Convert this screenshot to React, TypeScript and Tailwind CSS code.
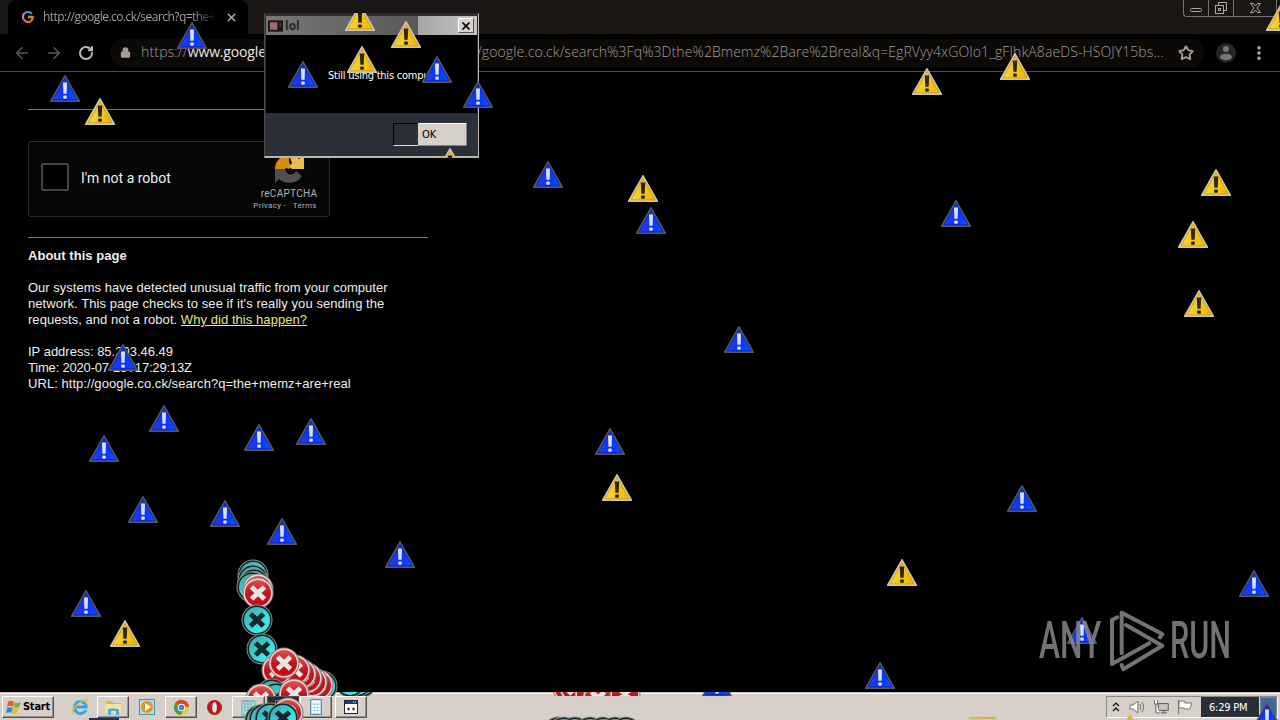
import React from "react";
import { ArrowLeft, ArrowRight, RotateCw, Lock, Star, X, MoreVertical } from "lucide-react";

type Mark = { x: number; y: number; clip?: string };

const blueMarks: Mark[] = [
    { x: 192, y: 36 }, { x: 65, y: 89 }, { x: 303, y: 75 }, { x: 437, y: 70 }, { x: 478, y: 95 },
    { x: 548, y: 175 }, { x: 651, y: 221 }, { x: 956, y: 214 }, { x: 739, y: 340 }, { x: 123, y: 358 },
    { x: 164, y: 419 }, { x: 104, y: 449 }, { x: 259, y: 438 }, { x: 311, y: 432 }, { x: 143, y: 510 },
    { x: 225, y: 514 }, { x: 282, y: 532 }, { x: 400, y: 555 }, { x: 610, y: 442 }, { x: 1022, y: 499 },
    { x: 86, y: 604 }, { x: 1254, y: 584 }, { x: 880, y: 676 }, { x: 1082, y: 631 },
    { x: 717, y: 684, clip: "inset(22px 0 1px 0)" }, { x: 1267, y: 716 },
];

const yellowMarks: Mark[] = [
    { x: 100, y: 112 }, { x: 362, y: 60 }, { x: 406, y: 35 }, { x: 360, y: 18, clip: "inset(9px 0 0 0)" },
    { x: 450, y: 162, clip: "inset(0 0 17px 0)" }, { x: 927, y: 82 }, { x: 1015, y: 67 }, { x: 643, y: 189 },
    { x: 1216, y: 183 }, { x: 1193, y: 235 }, { x: 1199, y: 304 }, { x: 617, y: 488 }, { x: 902, y: 573 },
    { x: 125, y: 634 }, { x: 1281, y: 18 }, { x: 1130, y: 727 },
    { x: 982, y: 707, clip: "inset(24px 0 0 0)" },
];

const upperStack: { x: number; y: number; red?: boolean }[] = [
    { x: 253, y: 575 }, { x: 253, y: 580 }, { x: 254, y: 584 }, { x: 252, y: 587 },
    { x: 258, y: 589, red: true }, { x: 258, y: 593, red: true },
    { x: 257, y: 620 }, { x: 262, y: 649 },
    { x: 322, y: 686 }, { x: 318, y: 685, red: true }, { x: 312, y: 682, red: true }, { x: 307, y: 678, red: true },
    { x: 301, y: 674, red: true }, { x: 295, y: 670, red: true }, { x: 277, y: 670, red: true },
    { x: 284, y: 663, red: true },
    { x: 272, y: 694 }, { x: 276, y: 698 }, { x: 261, y: 699, red: true }, { x: 294, y: 694, red: true },
];

function BlueTriangle({ mark }: { mark: Mark }) {
    return (
        <svg
            className="absolute h-[27px] w-[30px]"
            style={{ left: mark.x - 15, top: mark.y - 14, clipPath: mark.clip }}
            viewBox="0 0 30 27"
        >
            <path d="M15 .8 29.3 26.2H.7Z" fill="url(#blueFill)" stroke="#55585a" strokeWidth="1.6" strokeLinejoin="round" />
            <path d="M15 3.5 27 24.8H3Z" fill="none" stroke="#0a22b4" strokeWidth=".8" />
            <path d="M13 7.5h4L16.6 18.8h-3.2Z" fill="#dce2fa" />
            <rect x="13.2" y="20.400" width="3.600" height="3.400" rx="1" fill="#dce2fa" />
        </svg>
    );
}

function YellowTriangle({ mark }: { mark: Mark }) {
    return (
        <svg
            className="absolute h-[27px] w-[30px]"
            style={{ left: mark.x - 15, top: mark.y - 14, clipPath: mark.clip }}
            viewBox="0 0 30 27"
        >
            <path d="M15 .8 29.3 26.2H.7Z" fill="url(#yellowFill)" stroke="#cbc5b8" strokeWidth="1.6" strokeLinejoin="round" />
            <path d="M15 3.5 27 24.8H3Z" fill="none" stroke="#d69b00" strokeWidth=".8" />
            <path d="M12.8 7.5h4.400L16.6 18.8h-3.200Z" fill="#28240f" />
            <rect x="13.1" y="20.400" width="3.8" height="3.4" rx="1" fill="#28240f" />
        </svg>
    );
}

function Orb({ x, y, red }: { x: number; y: number; red?: boolean }) {
    return (
        <g transform={`translate(${x} ${y})`}>
            <circle r="15.5" fill={red ? "#8b7d7a" : "#858d8b"} />
            <circle r="14.5" fill={red ? "#e7d6d3" : "#142222"} />
            <circle r="13" fill={red ? "url(#redFill)" : "url(#tealFill)"} />
            <path d="M-6.500-6 6.500 6M6.500-6-6.500 6" stroke={red ? "#e9e6e2" : "#17262b"} strokeWidth="5" />
        </g>
    );
}

function BrowserBar() {
    return (
        <header className="flex h-[72px] flex-col border-b border-[#4c4c4c]">
            <div className="flex h-[34px] shrink-0 justify-between bg-[#1a1613]">
                <div className="ml-2 flex h-[34px] w-60 items-center rounded-t-lg bg-black pl-[14px] text-[#a8a4a0]">
                    <svg className="h-3 w-3" viewBox="0 0 12 12" fill="none" strokeWidth="2.3">
                        <path d="M9.8 2.8A5 5 0 0 0 3 1.9" stroke="#22a7b8" />
                        <path d="M3 1.9A5 5 0 0 0 1.6 8.3" stroke="#b57dbb" />
                        <path d="M1.6 8.3A5 5 0 0 0 8.8 10.2" stroke="#de653e" />
                        <path d="M8.8 10.2A5 5 0 0 0 10.8 6H6" stroke="#c9823c" />
                    </svg>
                    <span className="ml-[9px] w-[178px] whitespace-nowrap bg-linear-to-r from-[#a8a4a0] from-85% to-black bg-clip-text font-['Open_Sans'] text-[12px] tracking-[-0.54px] text-transparent">
                        http://google.co.ck/search?q=the+r
                    </span>
                    <X className="ml-[4px] h-[13px] w-[13px]" strokeWidth={3} />
                </div>
                <div className="mr-[3px] flex h-[17px] rounded-b border border-t-0 border-[#77726f] text-[#aaa6a3]">
                    <div className="flex w-[25px] justify-center border-r border-[#77726f]">
                        <svg className="h-4 w-4" viewBox="0 0 16 16" fill="none" stroke="currentColor">
                            <rect x="2.5" y="8.5" width="11" height="3" rx="1" />
                        </svg>
                    </div>
                    <div className="flex w-[25px] justify-center border-r border-[#77726f]">
                        <svg className="h-4 w-4" viewBox="0 0 16 16" fill="none" stroke="currentColor">
                            <path d="M5.5 5V2.500h8v8H11" />
                            <rect x="2.500" y="5.500" width="8" height="8" />
                            <rect x="5.500" y="8.500" width="2" height="2" />
                        </svg>
                    </div>
                    <div className="flex w-[42px] justify-center">
                        <svg className="h-4 w-4" viewBox="0 0 16 16" fill="none" stroke="currentColor">
                            <path d="M3.500 3.500h3L8.500 6l2-2.500h3L10 8l3.500 4.500h-3L8.500 10l-2 2.500h-3L7 8Z" />
                        </svg>
                    </div>
                </div>
            </div>
            <div className="flex h-[37px] items-center bg-black">
                <ArrowLeft className="ml-[13px] h-[18px] w-[18px] text-[#5b5b5b]" />
                <ArrowRight className="ml-[14px] h-[18px] w-[18px] text-[#5b5b5b]" />
                <RotateCw className="ml-[15px] h-4 w-4 text-[#b8b8b8]" strokeWidth={3} />
                <div className="ml-4 flex h-7 w-[1095px] items-center rounded-full bg-[#0c0907] pl-[10px] text-[#a19d99]">
                    <Lock className="h-[13px] w-[11px] fill-current" strokeWidth={2.5} />
                    <div className="relative -top-px ml-[10px] h-5 w-[1026px] whitespace-nowrap font-['Open_Sans'] text-[14px] leading-5 font-light">
                        <span className="tracking-[0.17px]">
                            https://<span className="font-normal tracking-[-0.15px] text-[#e9e6e2]">www.google</span>
                        </span>
                        <span className="absolute left-[336px] top-0 tracking-[0.09px]">
                            /google.co.ck/search%3Fq%3Dthe%2Bmemz%2Bare%2Breal&amp;q=EgRVyy4xGOIo1_gFIhkA8aeDS-HSOJY15bs...
                        </span>
                    </div>
                    <Star className="ml-[11px] h-4 w-4" strokeWidth={2.8} />
                </div>
                <svg className="ml-[11px] h-5 w-5" viewBox="0 0 20 20">
                    <circle cx="10" cy="10" r="10" fill="#252525" />
                    <circle cx="10" cy="6" r="3" fill="#777" />
                    <ellipse cx="10" cy="14" rx="6" ry="3.200" fill="#777" />
                </svg>
                <MoreVertical className="ml-[14px] h-[18px] w-[18px] text-[#b0b0b0]" strokeWidth={2.800} />
            </div>
        </header>
    );
}

function Captcha() {
    return (
        <div className="mt-[31px] flex h-[76px] w-[302px] rounded-[3px] border border-[#2b2b2b] bg-[#060606] pl-3">
            <div className="mt-[21px] h-7 w-7 rounded-[2px] border-2 border-[#444] bg-black" />
            <span className="ml-3 mt-[26px] w-[170px] font-['Roboto'] text-[14px] leading-5">I'm not a robot</span>
            <div className="flex w-[76px] flex-col items-center text-[#b2b2b2]">
                <svg className="mt-[11px] h-[31px] w-[31px]" viewBox="0 0 31 31">
                    <path d="M1 16A14 14 0 0 1 15 2v7l2 4-2 3-3-1-1 1Z" fill="#d58c12" />
                    <path d="M15 2a14 14 0 0 1 10 4l5-4v14H18l-3-2 3-4Z" fill="#e8bd4c" />
                    <path d="M1 16v14l4-4c7 6 18 5 23-3l-6-5c-2 5-9 5-11-2Z" fill="#505050" />
                </svg>
                <span className="mt-[3px] font-['Roboto'] text-[10px] leading-[13px] tracking-[0.3px]">reCAPTCHA</span>
                <span className="-ml-2 mt-[1px] whitespace-pre font-['Roboto'] text-[8px] leading-[10px] tracking-[0.3px]">Privacy -   Terms</span>
            </div>
        </div>
    );
}

function Page() {
    return (
        <main className="h-[620px] pl-7 pt-[37px] font-['Liberation_Sans'] text-[13px] leading-4 text-[#eeeeee]">
            <hr className="w-[400px] border-[#747474]" />
            <Captcha />
            <hr className="mt-5 w-[400px] border-[#747474]" />
            <p className="mt-[10px] font-bold tracking-[0.03px]">About this page</p>
            <p className="mt-4 whitespace-nowrap">
                <span className="tracking-[0.01px]">Our systems have detected unusual traffic from your computer</span>
                <br />
                <span className="tracking-[0.07px]">network. This page checks to see if it's really you sending the</span>
                <br />
                <span className="tracking-[0.04px]">requests, and not a robot. </span>
                <span className="tracking-[0.06px] text-[#e5e879] underline">Why did this happen?</span>
            </p>
            <p className="mt-4">
                IP address: 85.203.46.49
                <br />
                <span className="tracking-[-0.19px]">Time: 2020-07-23T17:29:13Z</span>
                <br />
                <span className="tracking-[0.05px]">URL: http://google.co.ck/search?q=the+memz+are+real</span>
            </p>
        </main>
    );
}

function Dialog() {
    return (
        <div className="absolute left-[264px] top-[13px] flex h-[145px] w-[215px] flex-col border border-b-2 border-[#b9b7af] border-l-[#4d4d4d] border-t-[#292929] bg-[#2b2f37] px-px pt-[2px] font-['DejaVu_Sans_Condensed'] text-[11px]">
            <div className="flex h-[19px] shrink-0">
                <div className="flex w-[152px] items-center bg-linear-to-r from-[#777] to-[#595959] pl-[2px] text-[#2b2b2b]">
                    <svg className="h-3 w-[15px]" viewBox="0 0 16 12">
                        <rect width="16" height="12" fill="#171717" />
                        <rect x="2" y="2" width="8" height="8" fill="#9f696b" />
                        <path d="M12 2h2v6h-2" fill="#592425" />
                    </svg>
                    <span className="ml-[2px] pt-px text-[12px] font-bold">lol</span>
                </div>
                <div className="flex flex-1 items-center justify-end bg-linear-to-r from-[#a5a5a5] to-[#c5c5c5] pr-[3px]">
                    <div className="flex h-[15px] w-4 items-center justify-center border border-[#555] border-l-white border-t-white bg-[#d6d2ca] text-black">
                        <X className="h-[12px] w-[12px] shrink-0" strokeWidth={3.500} />
                    </div>
                </div>
            </div>
            <div className="h-[78px] shrink-0 whitespace-nowrap bg-black pl-[62px] pt-[33px] leading-4 tracking-[-0.23px] text-white">
                Still using this compu
            </div>
            <div className="ml-[127px] mt-[10px] flex h-[23px] w-[74px] shrink-0">
                <div className="w-[25px] border border-r-0 border-black border-b-[#dedede]" />
                <div className="flex-1 border border-[#87857f] border-l-0 border-t-white bg-[#d4d0c8] pl-[4px] leading-[21px] text-black">OK</div>
            </div>
        </div>
    );
}

function TaskButton({ children, className = "" }: { children?: React.ReactNode; className?: string }) {
    return (
        <div className={"flex h-[22px] shrink-0 items-center justify-center border border-[#55524e] border-l-white border-t-white shadow-[inset_-1px_-1px_#96928d] " + className}>
            {children}
        </div>
    );
}

function Taskbar() {
    return (
        <footer className="flex h-7 items-start border-t border-[#bdb9b3] bg-[#d6d0c9] pt-[3px] shadow-[inset_0_1px_white]">
            <TaskButton className="ml-[2px] w-[52px] font-['DejaVu_Sans_Condensed'] text-[11px] font-bold text-black">
                <svg className="mr-px h-4 w-4" viewBox="0 0 16 16">
                    <path d="M2 3c2-2 4-1 6 0L7 8C5 6 3 7 1 8Z" fill="#e85b25" />
                    <path d="M9 3c2 2 4 1 6 0l-2 5c-2 1-4 1-5 0Z" fill="#78ac3e" />
                    <path d="M1 9c2-1 4-1 6 0l-2 5c-2-1-3-1-5 0Z" fill="#388ac3" />
                    <path d="M8 9c2 1 3 1 5 0l-2 5c-2 1-4 1-5 0Z" fill="#f1b72f" />
                </svg>
                <span className="pt-px tracking-[-0.2px]">Start</span>
            </TaskButton>
            <svg className="ml-[17px] mt-[2px] h-[18px] w-[18px]" viewBox="0 0 18 18" fill="none">
                <path d="M15 12a6 6 0 1 1 0-5v2H5" stroke="#3aa5db" strokeWidth="3" />
                <path d="M2 16C-1 13 7 5 13 2c4-2 4 1 2 3" stroke="#e5b94a" strokeWidth="1.300" />
            </svg>
            <TaskButton className="relative ml-2 w-8">
                <svg className="h-[18px] w-[18px]" viewBox="0 0 18 18">
                    <path d="M2 3h6l2 2h7v10H2Z" fill="#ddb656" />
                    <path d="M1 6h16v9H1Z" fill="#f3e49b" />
                    <path d="M4 17v-5c0-2 11-2 11 0v5h-3v-4H7v4Z" fill="#55a8d4" />
                </svg>
                <span className="absolute -bottom-[3px] -left-[9px] h-[2px] w-[30px] bg-[#26305c]" />
            </TaskButton>
            <svg className="ml-[10px] mt-[3px] h-4 w-4" viewBox="0 0 16 16">
                <rect x=".5" y=".5" width="15" height="15" fill="#b8dae9" stroke="#4594b8" />
                <circle cx="8" cy="8" r="6" fill="#ed9121" />
                <path d="m6 4 6 4-6 4Z" fill="white" />
            </svg>
            <TaskButton className="ml-[10px] w-8">
                <svg className="h-[17px] w-[17px]" viewBox="0 0 18 18">
                    <circle cx="9" cy="9" r="8" fill="#e9ca32" />
                    <path d="M9 9 2 5a8 8 0 0 1 15 3Z" fill="#d84733" />
                    <path d="M9 9 2 5a8 8 0 0 0 6 12l4-6Z" fill="#449d50" />
                    <circle cx="9" cy="9" r="4" fill="white" />
                    <circle cx="9" cy="9" r="3" fill="#3f84c5" />
                </svg>
            </TaskButton>
            <svg className="ml-[10px] mt-1 h-[15px] w-[15px]" viewBox="0 0 16 16">
                <ellipse cx="8" cy="8" rx="8" ry="8" fill="#b91920" />
                <ellipse cx="8" cy="8" rx="2.500" ry="5.500" fill="#ece7df" />
            </svg>
            <TaskButton className="ml-[10px] w-[33px]">
                <svg className="h-[17px] w-4" viewBox="0 0 16 17">
                    <rect x="1" y="2" width="13" height="14" fill="#a5dce4" stroke="#83a4ac" />
                    <path d="M2 2h12M3 5h9M3 8h9M3 11h9" stroke="#659ea5" strokeDasharray="2 1" />
                </svg>
            </TaskButton>
            <div className="ml-[2px] flex h-6 w-[32px] justify-center border border-[#555] bg-[#292b32] pt-[3px]">
                <div className="h-3 w-4 border border-[#777] bg-black" />
            </div>
            <TaskButton className="ml-[1px] w-8">
                <svg className="h-4 w-3" viewBox="0 0 12 16">
                    <rect x=".5" y=".5" width="11" height="15" fill="#b5d9ed" stroke="#668baa" />
                    <path d="M2 3h8" stroke="#e9f5fb" strokeWidth="3" />
                    <path d="M2 7h8M2 10h8M2 13h8" stroke="#fff" strokeWidth="2" strokeDasharray="2 1" />
                </svg>
            </TaskButton>
            <TaskButton className="ml-[3px] w-8">
                <svg className="h-[14px] w-[14px]" viewBox="0 0 14 14">
                    <rect x=".5" y=".5" width="13" height="13" fill="white" stroke="#252525" />
                    <path d="M1 1h12v3H1Z" fill="#17377c" />
                    <path d="M3 9h3m2 0h3M4.500 7.500v3m5-3v3" stroke="#222" />
                    <path d="M9 2h3" stroke="white" strokeDasharray="1 1" />
                </svg>
            </TaskButton>
            <div className="ml-auto mr-[2px] flex h-[22px] w-[172px] items-center border border-[#8c8984] border-b-white border-r-white text-[#111]">
                <svg className="ml-[5px] h-3 w-2" viewBox="0 0 8 12" fill="none" stroke="currentColor" strokeWidth="1.300">
                    <path d="m1 5 3-3 3 3M1 10l3-3 3 3" />
                </svg>
                <svg className="ml-[9px] h-4 w-[17px]" viewBox="0 0 17 16" fill="white" stroke="#6d6d6d">
                    <path d="M1 6h3l5-4v12l-5-4H1Z" />
                    <path d="M11 5q2 3 0 6M13 3q4 5 0 10" fill="none" />
                </svg>
                <svg className="ml-[7px] h-4 w-[17px]" viewBox="0 0 17 16" fill="#c5c2be" stroke="#5d5d5d">
                    <path d="M5.500 4.500h10v7h-10ZM8 14h6M11 12v2" />
                    <path d="M1.500 1v4h3V1M3 5v9h4" fill="white" />
                </svg>
                <svg className="ml-[8px] h-4 w-4" viewBox="0 0 16 16" fill="white" stroke="#737373">
                    <path d="M1.500 1v14M2 2h6v2h7l-2 6H7V9H2Z" />
                </svg>
                <div className="ml-[8px] h-[20px] w-[58px] shrink-0 bg-[#2a2f37] pr-1 text-center font-['DejaVu_Sans_Condensed'] text-[11px] leading-[21px] tracking-[-0.2px] text-white">6:29 PM</div>
                <div className="ml-[1px] h-[20px] w-[17px] border border-[#6b88a8] bg-[#416a94]" />
            </div>
        </footer>
    );
}

function Watermark() {
    return (
        <div className="absolute left-[1039px] top-[606px] flex h-[70px] w-[194px] items-center font-['Roboto'] text-[51px] leading-[70px] font-medium text-[#888] opacity-85">
            <span className="w-[66px] origin-left scale-x-[0.62]">ANY</span>
            <svg className="ml-[4px] h-[64px] w-[57px] shrink-0" viewBox="0 0 57 64" fill="none" stroke="currentColor" strokeWidth="4" strokeLinejoin="round" strokeLinecap="round">
                <path d="M8.300 8.300 3 11v44l37.300-20.700" />
                <path d="M12.700 44.300V3.700L53.300 25 51 28.300" />
                <path d="M17 16l36.300 20.700-39 23.600L12.700 56" />
            </svg>
            <span className="ml-[4px] w-[60px] origin-left scale-x-[0.6]">RUN</span>
        </div>
    );
}

export default function App() {
    return (
        <div className="relative h-[720px] w-[1280px] overflow-hidden bg-black">
            <BrowserBar />
            <Page />
            <Taskbar />
            <Dialog />
            <svg className="absolute inset-0 h-[720px] w-[1280px]" viewBox="0 0 1280 720">
                <defs>
                    <linearGradient id="blueFill"><stop stopColor="#2848dc" /><stop offset=".5" stopColor="#0c2fff" /><stop offset="1" stopColor="#0a5cff" /></linearGradient>
                    <linearGradient id="yellowFill"><stop stopColor="#f5d93e" /><stop offset="1" stopColor="#eeb400" /></linearGradient>
                    <linearGradient id="redFill" x2="0" y2="1"><stop stopColor="#dc5356" /><stop offset=".5" stopColor="#be151f" /><stop offset="1" stopColor="#cc0b13" /></linearGradient>
                    <linearGradient id="tealFill" x2="1" y2="1"><stop stopColor="#38a8ae" /><stop offset=".6" stopColor="#3cdcdc" /><stop offset="1" stopColor="#4ff5f0" /></linearGradient>
                    <clipPath id="desktop"><rect width="1280" height="696" /></clipPath>
                    <clipPath id="strip"><rect y="692" width="1280" height="4" /></clipPath>
                </defs>
                <g clipPath="url(#desktop)">
                    {upperStack.map((o, i) => <Orb key={i} {...o} />)}
                </g>
                <g clipPath="url(#strip)">
                    <Orb x={362} y={682} /><Orb x={357} y={682} /><Orb x={350} y={682} />
                    <Orb x={568} y={688} red /><Orb x={575} y={688} red /><Orb x={590} y={694} red />
                    <Orb x={598} y={698} red /><Orb x={625} y={694} red />
                </g>
                <Orb x={288} y={713} red />
                <Orb x={260} y={720} /><Orb x={264} y={719} /><Orb x={270} y={718} /><Orb x={283} y={718} />
                <Orb x={558} y={732} /><Orb x={564} y={732} /><Orb x={575} y={732} /><Orb x={590} y={732} />
                <Orb x={603} y={732} /><Orb x={615} y={732} /><Orb x={626} y={732} />
            </svg>
            {blueMarks.map((m, i) => <BlueTriangle key={i} mark={m} />)}
            {yellowMarks.map((m, i) => <YellowTriangle key={i} mark={m} />)}
            <Watermark />
        </div>
    );
}
